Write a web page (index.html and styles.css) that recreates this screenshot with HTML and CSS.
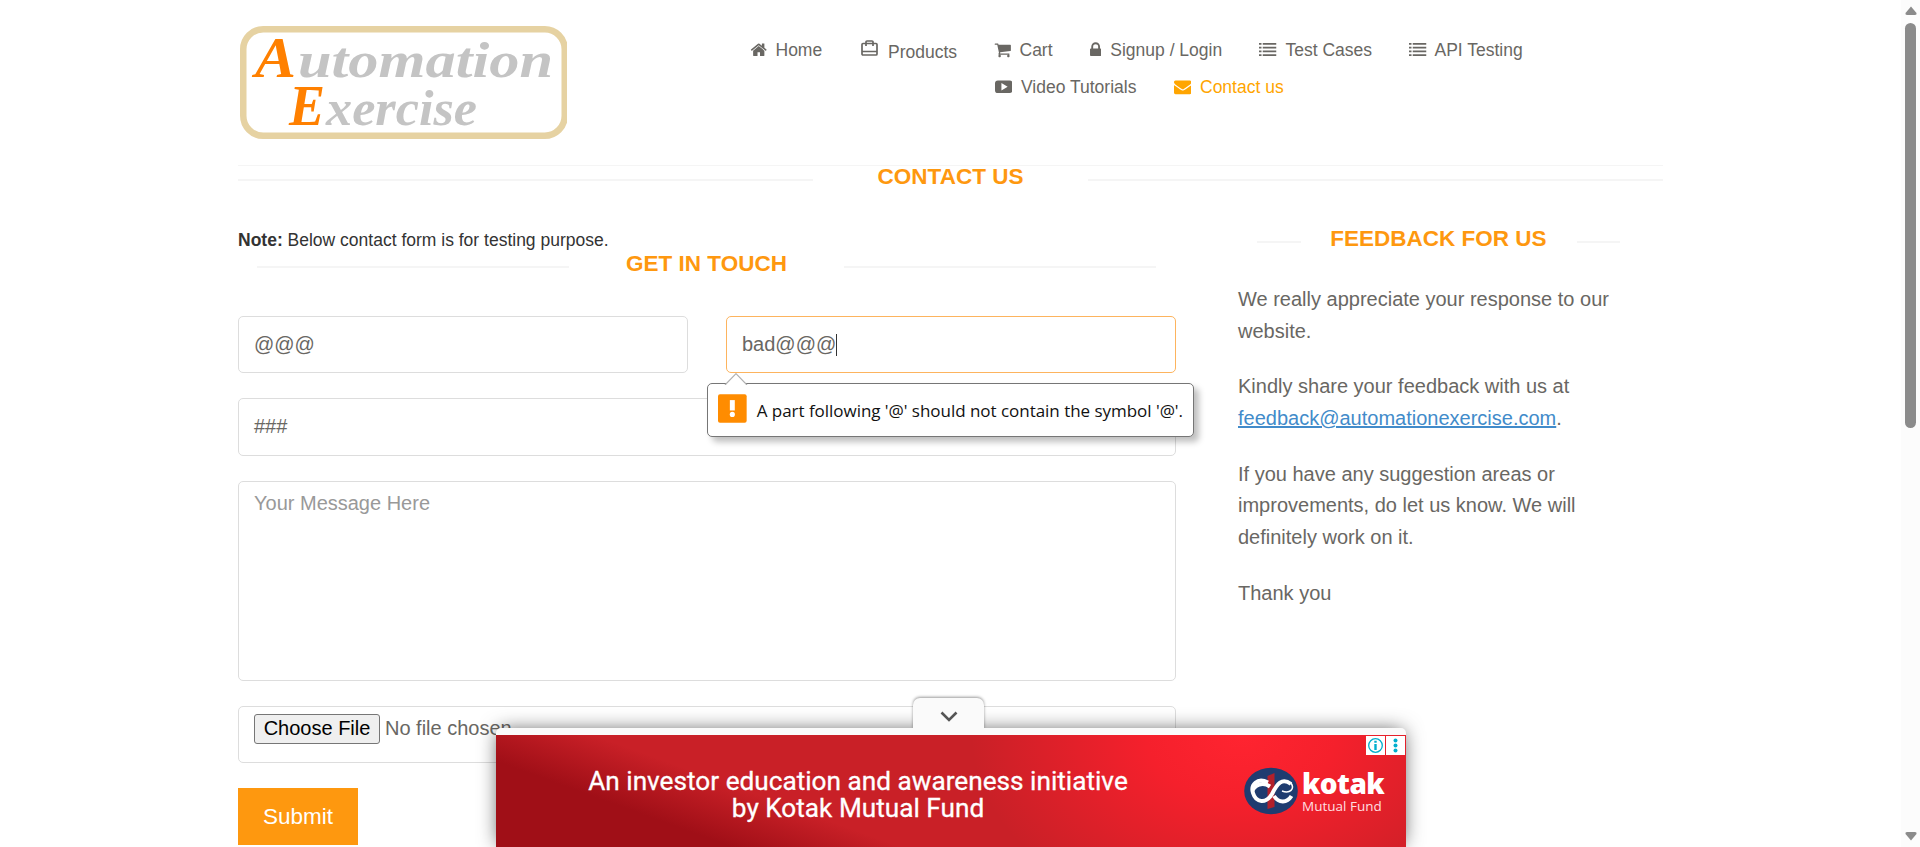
FILE: index.html
```html
<!DOCTYPE html>
<html lang="en">
<head>
<meta charset="utf-8">
<title>Automation Exercise - Contact Us</title>
<link rel="stylesheet" href="styles.css">
</head>
<body>
<svg width="0" height="0" class="defs">
  <symbol id="list" viewBox="0 0 1792 1792"><path d="M0 256h256v192H0zM0 640h256v192H0zM0 1024h256v192H0zM0 1408h256v192H0zM384 256h1408v192H384zM384 640h1408v192H384zM384 1024h1408v192H384zM384 1408h1408v192H384z" transform="translate(0,-64)"/></symbol>
</svg>
<div class="container">
  <header class="header">
    <a class="logo">
      <svg width="327" height="113" viewBox="0 0 327 113">
        <rect x="3.250" y="3.250" width="321.500" height="106.500" rx="20" fill="none" stroke="#e6d2a2" stroke-width="6.500"/>
        <g class="logo-text">
          <text x="15" y="51" font-size="56" textLength="41" lengthAdjust="spacingAndGlyphs" class="accent">A</text>
          <text x="58" y="51" font-size="51" textLength="255" lengthAdjust="spacingAndGlyphs">utomation</text>
          <text x="49" y="99" font-size="58" textLength="36" lengthAdjust="spacingAndGlyphs" class="accent">E</text>
          <text x="86" y="99" font-size="51" textLength="151" lengthAdjust="spacingAndGlyphs">xercise</text>
        </g>
      </svg>
    </a>
    <nav class="nav">
      <div class="nav-row">
        <a class="w-home"><svg class="ic" viewBox="0 0 1792 1792"><path d="M1472 992v480q0 26-19 45t-45 19h-384v-384h-256v384h-384q-26 0-45-19t-19-45v-480q0-1 .5-3t.5-3l575-474 575 474q1 2 1 6zm223-69l-62 74q-8 9-21 11h-3q-13 0-21-7l-692-577-692 577q-12 8-24 7-13-2-21-11l-62-74q-8-10-7-23.500t11-21.500l719-599q32-26 76-26t76 26l244 204v-195q0-14 9-23t23-9h192q14 0 23 9t9 23v408l219 182q10 8 11 21.500t-7 23.500z"/></svg>Home</a>
        <a class="w-products"><svg class="ic-products" viewBox="0 0 17 16"><path d="M1 4.500Q1 3.500 2 3.500H15Q16 3.500 16 4.500V14Q16 15 15 15H2Q1 15 1 14ZM1 11.500H16M5 6V1.800Q5 1 6 1H11Q12 1 12 1.800V6" fill="none" stroke="currentColor" stroke-width="1.700"/></svg>Products</a>
        <a class="w-cart"><svg class="ic" viewBox="0 0 1792 1792"><path d="M704 1536q0 52-38 90t-90 38-90-38-38-90 38-90 90-38 90 38 38 90zm896 0q0 52-38 90t-90 38-90-38-38-90 38-90 90-38 90 38 38 90zm128-1088v512q0 24-16.500 42.500t-40.500 21.500l-1044 122q13 60 13 70 0 16-24 64h920q26 0 45 19t19 45-19 45-45 19h-1024q-26 0-45-19t-19-45q0-11 8-31.500t16-36 21.500-40 15.500-29.500l-177-823h-204q-26 0-45-19t-19-45 19-45 45-19h256q16 0 28.500 6.500t19.500 15.500 13 24.500 8 26 5.500 29.500 4.500 26h1201q26 0 45 19t19 45z"/></svg>Cart</a>
        <a class="w-signup"><svg class="ic ic-lock" viewBox="320 0 1152 1792"><path d="M640 768h512v-192q0-106-75-181t-181-75-181 75-75 181v192zm832 96v576q0 40-28 68t-68 28h-960q-40 0-68-28t-28-68v-576q0-40 28-68t68-28h32v-192q0-184 132-316t316-132 316 132 132 316v192h32q40 0 68 28t28 68z"/></svg>Signup / Login</a>
        <a class="w-test"><svg class="ic"><use href="#list"/></svg>Test Cases</a>
        <a><svg class="ic"><use href="#list"/></svg>API Testing</a>
      </div>
      <div class="nav-row second">
        <a class="w-video"><svg class="ic" viewBox="0 0 18 18"><path fill-rule="evenodd" d="M3 2.500H15Q18 2.500 18 5.500V12.500Q18 15.500 15 15.500H3Q0 15.500 0 12.500V5.500Q0 2.500 3 2.500ZM6.600 5.200V12.800L13 9Z"/></svg>Video Tutorials</a>
        <a class="active"><svg class="ic" viewBox="0 0 1792 1792"><path d="M1792 710v794q0 66-47 113t-113 47h-1472q-66 0-113-47t-47-113v-794q44 49 101 87 362 246 497 345 57 42 92.500 65.500t94.500 48 110 24.500h2q51 0 110-24.500t94.500-48 92.500-65.500q170-123 498-345 57-39 100-87zm0-294q0 79-49 151t-122 123q-376 261-468 325-10 7-42.500 31t-54 38.500-52 32.500-57.500 27-50 9h-2q-23 0-50-9t-57.500-27-52-32.500-54-38.500-42.500-31q-91-64-262-182.500t-205-142.500q-62-42-117-115.500t-55-136.500q0-78 41.500-130t118.500-52h1472q65 0 112.500 47t47.500 113z"/></svg>Contact us</a>
      </div>
    </nav>
  </header>

  <h2 class="title title-page"><span>Contact Us</span></h2>

  <main class="columns">
    <section class="contact">
      <p class="note"><b>Note:</b> Below contact form is for testing purpose.</p>
      <h2 class="title title-touch"><span>Get In Touch</span></h2>
      <form class="form">
        <div class="pair">
          <div class="field">@@@</div>
          <div class="field focus">bad@@@<i class="caret"></i>
            <div class="tip">
              <svg class="tip-arrow" width="24" height="12" viewBox="0 0 24 12"><path d="M1 12L12 .700L23 12" fill="#fff" stroke="#b0b0b0" stroke-width="1.200"/></svg>
              <svg width="29" height="29" viewBox="0 0 29 29"><rect width="29" height="29" rx="2" fill="#ff8c00"/><path d="M12 6h5v10.500h-5z" fill="#fff"/><circle cx="14.500" cy="20.500" r="2.600" fill="#fff"/></svg>
              <span>A part following '@' should not contain the symbol '@'.</span>
            </div>
          </div>
        </div>
        <div class="field subject">###</div>
        <div class="field message">Your Message Here</div>
        <div class="field file"><span class="choose">Choose File</span><span>No file chosen</span></div>
        <button type="button" class="submit">Submit</button>
      </form>
    </section>
    <aside class="feedback">
      <h2 class="title title-feedback"><span>Feedback For Us</span></h2>
      <p>We really appreciate your response to our website.</p>
      <p>Kindly share your feedback with us at <a>feedback@automationexercise.com</a>.</p>
      <p>If you have any suggestion areas or improvements, do let us know. We will definitely work on it.</p>
      <p>Thank you</p>
    </aside>
  </main>
</div>

<div class="ad">
  <div class="ad-tab"><svg width="18" height="12" viewBox="0 0 18 12"><path d="M1.500 1.500L9 9L16.500 1.500" fill="none" stroke="#555" stroke-width="2.600"/></svg></div>
  <div class="ad-body">
    <p class="ad-copy"><span class="l1">An investor education and awareness initiative</span><span class="l2">by Kotak Mutual Fund</span></p>
    <div class="brand">
      <svg width="54" height="48" viewBox="0 0 54 48"><ellipse cx="27" cy="24" rx="26.800" ry="23.300" fill="#1f3c70"/><path d="M23.500 9L30.500 6V40L23.500 42Z" fill="#b3202b"/><path d="M24 15.500C13 10 6.500 18 9 26C12 36 22 37 28 27C33 17 38 10 47 17" fill="none" stroke="#fff" stroke-width="4"/><path d="M8.500 23C13 16.500 20 15.500 26 19.500M30 29C35 36.500 43 36 47.500 29" fill="none" stroke="#fff" stroke-width="4"/><path d="M47 16C51 22 46 27 38 24" fill="none" stroke="#fff" stroke-width="1.500"/></svg>
      <div class="brand-name"><b>kotak</b><span>Mutual Fund</span></div>
    </div>
    <div class="ad-choices">
      <svg width="19" height="19" viewBox="0 0 19 19"><path d="M0 0h19v19H0z" fill="#fff"/><circle cx="9.500" cy="9.500" r="6.800" fill="none" stroke="#00aecd" stroke-width="1.300"/><path d="M8.300 8h2.400v6H8.300zM8.300 4.800h2.400v2H8.300z" fill="#00aecd"/></svg>
      <svg width="19" height="19" viewBox="0 0 19 19"><path d="M0 0h19v19H0z" fill="#fff"/><g fill="#00aecd"><circle cx="9.500" cy="4.500" r="2"/><circle cx="9.500" cy="9.500" r="2"/><circle cx="9.500" cy="14.500" r="2"/></g></svg>
    </div>
  </div>
</div>

<div class="scrollbar">
  <svg width="12" height="9" viewBox="0 0 12 9"><path d="M6 .5L11.500 7Q12 9 10 9H2Q0 9 .5 7Z" fill="#8b8b8b"/></svg>
  <div class="thumb"></div>
  <svg class="down" width="12" height="9" viewBox="0 0 12 9"><path d="M6 8.500L11.500 2Q12 0 10 0H2Q0 0 .5 2Z" fill="#8b8b8b"/></svg>
</div>
</body>
</html>
```
FILE: styles.css
```css
* { box-sizing: border-box; }
body {
  margin: 0;
  height: 847px;
  overflow: hidden;
  background: #fff;
  font-family: "Liberation Sans", Arial, sans-serif;
  font-size: 17.5px;
  color: #696763;
}
p, h2 { margin: 0; }
.defs { position: absolute; }
.container { width: 1425px; margin-left: 238px; }

.header {
  display: flex;
  align-items: flex-start;
  height: 166px;
  padding: 26px 0 0 2px;
  border-bottom: 1px solid #f5f5f5;
}
.logo { width: 327px; height: 113px; }
.logo svg { display: block; }
.logo-text {
  font-family: "Liberation Serif", serif;
  font-style: italic;
  font-weight: 700;
  fill: #c4c4c4;
}
.logo-text .accent { fill: #ff8000; }
.nav { margin: 11px 0 0 183px; }
.nav-row { display: flex; height: 37px; line-height: 26.500px; white-space: nowrap; }
.nav-row.second { padding-left: 244.500px; }
.nav a { display: flex; }
.nav .ic { width: 17.500px; height: 17.500px; margin: 4px 8px 0 0; fill: currentColor; }
.nav .second .ic, .w-test .ic { margin-right: 9px; }
.nav .ic-lock { width: 11.300px; margin-right: 9px; }
.nav .ic-products { width: 17px; height: 16px; margin: 3px 10.500px 0 0; }
.w-home { width: 110.500px; }
.w-products { width: 133.500px; line-height: 30px; }
.w-cart { width: 96px; }
.w-signup { width: 169px; }
.w-test { width: 150px; }
.w-video { width: 179px; }
.nav .active { color: #ffa500; }

.title {
  display: flex;
  align-items: center;
  font-size: 22.500px;
  line-height: 26px;
  font-weight: 700;
  text-transform: uppercase;
  color: #fe980f;
  white-space: nowrap;
}
.title::before, .title::after { content: ""; flex: 1; height: 2px; margin-top: 6px; background: #f5f5f5; }
.title span { text-align: center; }
.title-page { height: 26px; margin: -2px 0 1px; }
.title-page span { width: 275px; }

.columns { display: flex; }
.contact { width: 938px; }
.note { margin-top: 37px; line-height: 25px; color: #333; }
.title-touch { margin: -4px 20px 0 19px; padding-top: 2px; }
.title-touch span { width: 275px; }

.form { font-size: 20px; margin-top: 39px; }
.pair { display: flex; gap: 38px; }
.field {
  width: 100%;
  height: 57px;
  padding: 0 15px;
  border: 1px solid #ddd;
  border-radius: 5px;
  line-height: 55px;
}
.pair .field { width: 450px; }
.focus { position: relative; border-color: #fdb45e; }
.caret { display: inline-block; width: 1px; height: 22px; background: #333; vertical-align: -5px; }
.subject { margin-top: 25px; height: 58px; }
.message { margin-top: 25px; height: 200px; line-height: 42px; color: #999; }
.file { margin-top: 25px; display: flex; padding-top: 7px; line-height: 28px; }
.choose {
  width: 126px;
  height: 30px;
  line-height: 27px;
  margin-right: 5px;
  text-align: center;
  color: #000;
  background: #efefef;
  border: 1px solid #767676;
  border-radius: 3px;
}
.submit {
  display: block;
  width: 120px;
  height: 57px;
  margin-top: 25px;
  padding: 0;
  border: 0;
  background: #fe980f;
  color: #fff;
  font: 22.500px "Liberation Sans", Arial, sans-serif;
}

.tip {
  position: absolute;
  left: -20px;
  top: 66px;
  z-index: 2;
  display: flex;
  align-items: center;
  width: 487px;
  height: 54px;
  padding: 0 10px 3px;
  background: #fff;
  border: 1px solid #767676;
  border-radius: 5px;
  box-shadow: 5px 5px 6px rgba(0, 0, 0, .25);
  font: 17px/40px "Open Sans", "Noto Sans", sans-serif;
  color: #111;
  white-space: nowrap;
}
.tip span { margin: 4px 0 0 10px; letter-spacing: -.03px; }
.tip-arrow { position: absolute; left: 16px; top: -11px; }

.feedback { width: 390px; margin-left: 62px; font-size: 20px; line-height: 31.600px; }
.title-feedback { margin: 32px 0 32px; padding: 3px 0 0 19px; width: 382px; }
.title-feedback span { width: 276px; }
.feedback p { margin-bottom: 24.200px; }
.feedback a { color: #428bca; text-decoration: underline; }

.ad {
  position: absolute;
  left: 496px;
  top: 728px;
  width: 910px;
  height: 119px;
  padding-top: 7px;
  background: #fafafa;
  border-radius: 5px 5px 0 0;
  box-shadow: 0 0 20px -3px rgba(0, 0, 0, .7);
}
.ad-tab {
  position: absolute;
  left: 417px;
  top: -30px;
  width: 71px;
  height: 31px;
  padding: 13px 0 0 27px;
  background: #fafafa;
  border-radius: 7px 7px 0 0;
  box-shadow: 0 -1px 3px rgba(0, 0, 0, .4);
  clip-path: inset(-5px -5px 1px);
}
.ad-tab svg { display: block; }
.ad-body {
  position: relative;
  display: flex;
  height: 112px;
  background:
    radial-gradient(ellipse 270px 190px at 745px 0, #ff2430 0, #f5202c 35%, rgba(201, 32, 39, 0) 100%),
    linear-gradient(200deg, rgba(201, 32, 39, 0) 45%, #a00f17 68%),
    #c92027;
  background-size: 100% 100%, 430px 100%, 100% 100%;
  background-repeat: no-repeat;
  color: #fff;
}
.ad-copy {
  display: flex;
  flex-direction: column;
  align-items: center;
  width: 540px;
  margin: 33px 0 0 92px;
  font: 400 26.200px/26.500px Roboto, sans-serif;
  -webkit-text-stroke: .3px #fff;
  white-space: nowrap;
}
.brand { display: flex; margin: 32px 0 0 116px; }
.brand-name { display: flex; flex-direction: column; margin: -1px 0 0 4px; font-family: "Open Sans", sans-serif; }
.brand-name b { font-size: 28px; line-height: 34px; font-weight: 800; letter-spacing: -.6px; }
.brand-name span { font-size: 13.500px; line-height: 16px; margin-top: -2px; color: #ffdfe0; }
.ad-choices { position: absolute; right: 1px; top: 1px; display: flex; gap: 1px; }

.scrollbar {
  position: absolute;
  right: 0;
  top: 0;
  display: flex;
  flex-direction: column;
  align-items: center;
  width: 19px;
  height: 847px;
  padding: 6px 0;
  background: #fcfcfc;
}
.thumb { width: 11px; height: 405px; margin-top: 8px; border-radius: 6px; background: #8b8b8b; }
.down { margin-top: auto; }
```
